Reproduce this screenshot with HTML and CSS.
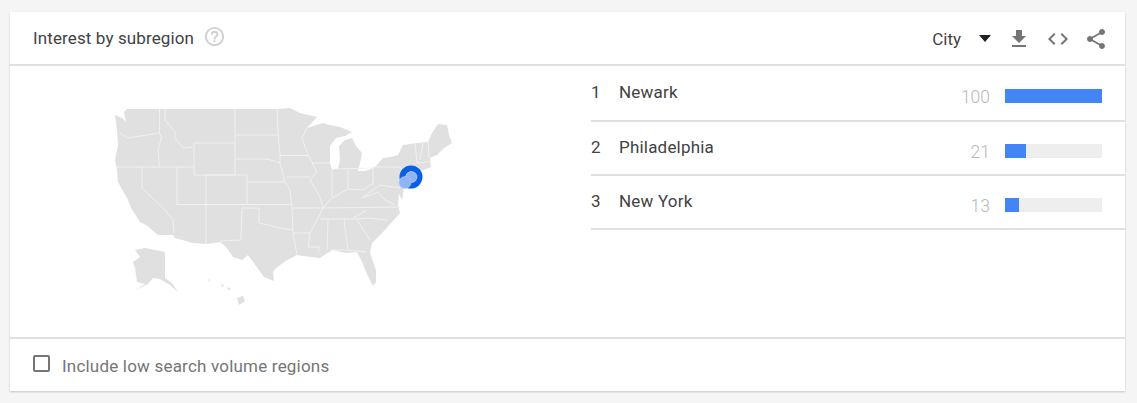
FILE: index.html
```html
<!DOCTYPE html>
<html lang="en">
<head>
<meta charset="utf-8">
<title>Interest by subregion</title>
<link rel="stylesheet" href="styles.css">
</head>
<body>
<section class="card">
  <header class="card-head">
    <h2 class="title">Interest by subregion</h2>
    <svg class="help" viewBox="0 0 24 24"><path d="M11 18h2v-2h-2v2zm1-16C6.48 2 2 6.48 2 12s4.48 10 10 10 10-4.48 10-10S17.52 2 12 2zm0 18c-4.41 0-8-3.59-8-8s3.59-8 8-8 8 3.59 8 8-3.59 8-8 8zm0-14c-2.21 0-4 1.79-4 4h2c0-1.1.9-2 2-2s2 .9 2 2c0 2-3 1.75-3 5h2c0-2.25 3-2.5 3-5 0-2.21-1.79-4-4-4z"/></svg>
    <div class="tools">
      <span class="select">City</span>
      <span class="caret"></span>
      <svg class="tool tool-download" viewBox="0 0 24 24"><path d="M19 9h-4V3H9v6H5l7 7 7-7zM5 18v2h14v-2H5z"/></svg>
      <svg class="tool tool-code" viewBox="0 0 24 24"><path d="M9.4 16.6L4.8 12l4.6-4.6L8 6l-6 6 6 6 1.4-1.4zm5.2 0l4.6-4.6-4.6-4.6L16 6l6 6-6 6-1.4-1.4z"/></svg>
      <svg class="tool tool-share" viewBox="0 0 24 24"><path d="M18 16.08c-.76 0-1.44.3-1.96.77L8.91 12.7c.05-.23.09-.46.09-.7s-.04-.47-.09-.7l7.05-4.11c.54.5 1.25.81 2.04.81 1.66 0 3-1.34 3-3s-1.34-3-3-3-3 1.34-3 3c0 .24.04.47.09.7L8.04 9.81C7.5 9.31 6.79 9 6 9c-1.66 0-3 1.34-3 3s1.34 3 3 3c.79 0 1.5-.31 2.04-.81l7.12 4.16c-.05.21-.08.43-.08.65 0 1.61 1.31 2.92 2.92 2.92 1.61 0 2.92-1.31 2.92-2.92s-1.31-2.92-2.92-2.92z"/></svg>
    </div>
  </header>
  <div class="card-body">
    <div class="map-pane">
      <svg class="map" viewBox="100 100 370 215">
        <path class="land" d="M127 109 L159 109 L235 109 L277 109 L290 108 L300 113 L317 117 L307 128 L323 123 L330 125 L340 127 L352 132 L345 136 L336 138 L330 146 L330 163 L332 169 L338 169 L340 160 L339 146 L345 140 L352 138 L356 146 L362 153 L360 163 L358 171 L366 171 L375 167 L383 158 L391 157 L398 155 L403 145 L417 143 L428 142 L432 133 L438 124 L447 125 L449 135 L452 143 L444 148 L437 155 L430 158 L431 167 L424 170 L416 171 L408 176 L404 186 L403 195 L402 200 L399 194 L398 205 L400 213 L392 222 L383 232 L372 243 L370 253 L376 270 L376 282 L373 286 L366 272 L362 262 L357 252 L346 253 L333 250 L326 254 L320 258 L311 257 L303 256 L297 255 L287 260 L276 268 L273 272 L274 281 L264 277 L256 266 L248 255 L242 260 L233 257 L226 247 L220 242 L206 244 L193 243 L175 238 L173 235 L158 235 L146 225 L140 222 L131 208 L128 200 L118 182 L117 170 L115 160 L118 145 L117 130 L115 115 L122 118 L126 122 L124 112 Z"/>
        <path class="land" d="M135 250 L145 248 L165 252 L165 278 L172 283 L178 292 L170 285 L160 279 L153 278 L148 284 L134 291 L145 284 L137 282 L135 268 L133 262 L140 257 Z"/>
        <path class="land" d="M237 298 L243 296 L245 301 L239 305 Z M208 279 L210 280 L209 282 Z M221 284 L224 285 L222 287 Z M227 287 L231 289 L228 290 Z"/>
        <g class="borders">
          <path d="M120 133 L127 138 L147 135 L159 133 M159.500 109 L159.500 133 L161.500 137 L158 150 L159.500 167"/>
          <path d="M165 109 L165 120 L175 132 L175 138 L183 148 L193 147"/>
          <path d="M117 167 L194 167 M142 167 L142 188 L165 210 L173 220 L174 233 M177 167 L177 205 M194 143 L235 143 L235 175 L194 175 L194 143"/>
          <path d="M206 175 L206 244 M206 175 L247 175 L247 205 M177 204.500 L292 204.500 M247 182 L285 182 M235 109 L235 143"/>
          <path d="M277 109 L278 130 L280 155 L280 163 L285 182 L290 190 L292 208 L293 233 L297 255 M235 135 L278 135 M236 159 L267 159 L280 163"/>
          <path d="M280 155.500 L308 155.500 M287 177 L310 177 M307 128 L302 138 L308 155 L317 172 L310 180 L320 197 L323 208 L317 220 L310 233 L308 247 L320 247 L318 252"/>
          <path d="M312 163 L330 163 M292 208 L320 208 L400 207 M242 208 L241 240 L220 241 M242 208 L259 208 L259 223 L280 228 L293 230 M294 233 L310 233"/>
          <path d="M328 220 L327 250 M344 220 L348 250 M330 250 L348 250 L367 252 M320 219 L357 219 L367 218 L387 220 M353 218 L367 210 M357 220 L370 240"/>
          <path d="M348 170 L348 189 M332 169 L332 197 M333 169 L373 168 L373 185 M373 167 L400 167 L404 174 M332 198 L348 189 L363 190 L373 183 M323 208 L332 198 M362 198 L380 185 L400 188 M395 205 L385 200 L378 192 L362 198"/>
          <path d="M415 143 L417 163 M423 143 L420 160 M428 142 L429 158 M417 163 L430 162"/>
        </g>
        <circle class="dot-ring" cx="411" cy="177" r="8.500"/>
        <circle class="dot" cx="411.500" cy="177" r="5.500"/>
        <circle class="dot" cx="405" cy="182.500" r="6"/>
      </svg>
    </div>
    <ol class="rank-list">
      <li class="rank-row">
        <span class="rank">1</span><span class="place">Newark</span><span class="score">100</span>
        <span class="track"><span class="fill" style="width:100%"></span></span>
      </li>
      <li class="rank-row">
        <span class="rank">2</span><span class="place">Philadelphia</span><span class="score">21</span>
        <span class="track"><span class="fill" style="width:22%"></span></span>
      </li>
      <li class="rank-row">
        <span class="rank">3</span><span class="place">New York</span><span class="score">13</span>
        <span class="track"><span class="fill" style="width:14%"></span></span>
      </li>
    </ol>
  </div>
  <footer class="card-foot">
    <span class="checkbox"></span>
    <span class="foot-label">Include low search volume regions</span>
  </footer>
</section>
</body>
</html>
```
FILE: styles.css
```css
* { box-sizing: border-box; }
html, body { margin: 0; height: 100%; }
body {
  background: #f5f5f5;
  padding: 12px 12px 0 10px;
  font-family: Roboto, "Liberation Sans", sans-serif;
  overflow: hidden;
}
.card {
  background: #fff;
  height: 379px;
  display: flex;
  flex-direction: column;
  box-shadow: 0 1px 2px rgba(0, 0, 0, .2);
}
.card-head {
  height: 54px;
  flex: none;
  display: flex;
  align-items: center;
  padding: 0 17px 2px 23px;
  border-bottom: 2px solid #e0e0e0;
}
.title {
  margin: 1px 0 0;
  font-size: 17px;
  font-weight: 400;
  color: #424242;
  letter-spacing: .12px;
}
.help { width: 23px; height: 23px; margin-left: 9px; margin-top: -2px; fill: #d0d0d0; }
.tools { margin-left: auto; display: flex; align-items: center; }
.select { font-size: 17px; color: #424242; margin-top: 3px; }
.caret {
  width: 0; height: 0;
  margin-left: 18px;
  margin-top: 2px;
  border-left: 6px solid transparent;
  border-right: 6px solid transparent;
  border-top: 7px solid #212121;
}
.tool { width: 24px; height: 24px; margin-top: 4px; fill: #757575; }
.tool-download { margin-left: 16px; }
.tool-code { margin-left: 15px; }
.tool-share { margin-left: 14px; }

.card-body { flex: 1; display: flex; min-height: 0; }
.map-pane { width: 581px; flex: none; padding: 34px 0 0 90px; }
.map { display: block; width: 370px; height: 215px; }
.land { fill: #e0e0e0; }
.borders path { fill: none; stroke: #f2f2f2; stroke-width: .9; }
.dot-ring { fill: none; stroke: #0b5fe3; stroke-width: 6; }
.dot { fill: #8fb4f5; stroke: #b5cdf8; stroke-width: .6; }

.rank-list { list-style: none; margin: 0; padding: 0; flex: 1; }
.rank-row {
  height: 54px;
  display: flex;
  align-items: center;
  border-bottom: 2px solid #e0e0e0;
  padding-right: 23px;
}
.rank-row:first-child { height: 56px; }
.rank { width: 28px; font-size: 17px; color: #424242; margin-top: -2px; }
.place { flex: 1; font-size: 17px; color: #424242; letter-spacing: .2px; margin-top: -2px; }
.score { font-size: 17.500px; font-weight: 300; color: #b8b8b8; margin-right: 15px; margin-top: 7px; }
.track { width: 97px; height: 14px; background: #eee; margin-top: 6px; display: block; }
.fill { display: block; height: 100%; background: #4285f4; }

.card-foot {
  height: 54px;
  flex: none;
  display: flex;
  align-items: center;
  padding: 0 0 0 23px;
  border-top: 2px solid #e0e0e0;
}
.checkbox {
  width: 17px; height: 17px;
  border: 2px solid #757575;
  border-radius: 2px;
  margin-top: -3px;
}
.foot-label { margin-left: 12px; font-size: 17px; color: #757575; letter-spacing: .2px; margin-top: 2px; }
```
